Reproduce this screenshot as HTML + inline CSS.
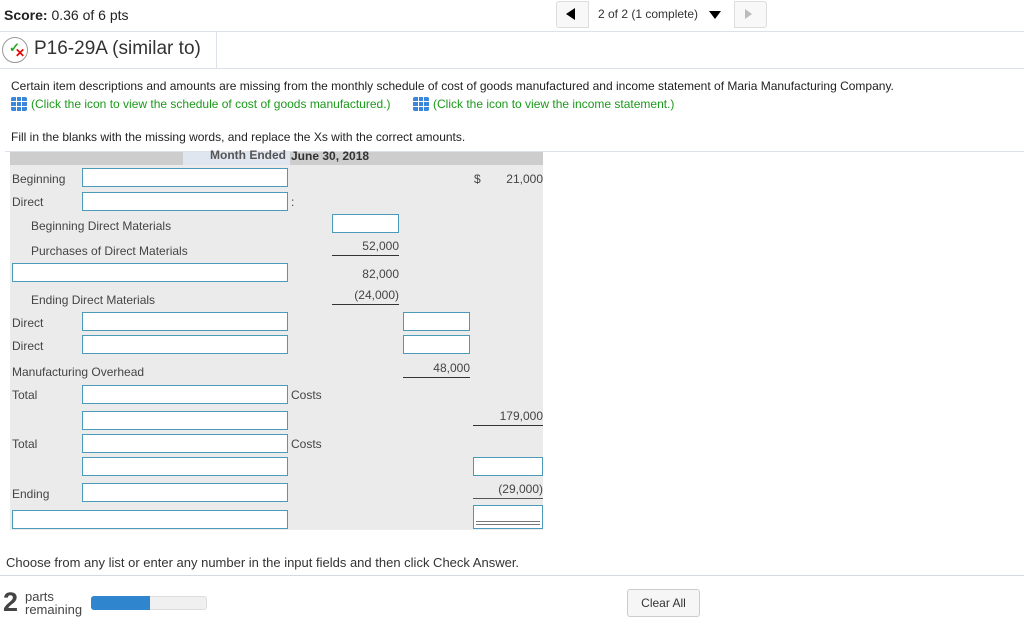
<!DOCTYPE html>
<html><head><meta charset="utf-8"><style>
*{box-sizing:border-box;margin:0;padding:0}
body{width:1024px;height:627px;background:#fff;font-family:"Liberation Sans",sans-serif;color:#333;position:relative;overflow:hidden}
.a{position:absolute;white-space:nowrap}
.t{font-size:12px;color:#444}
.in{position:absolute;background:#fff;border:1px solid #4a9ab8;height:19px}
.r{text-align:right}
.ul{position:absolute;height:1px;background:#333}
.ico{display:inline-block;width:16px;height:14px;background:#3b86d8;vertical-align:-3px;margin-right:4px;border-radius:2px;background-image:linear-gradient(90deg,transparent 5px,#fff 5px,#fff 6px,transparent 6px,transparent 10px,#fff 10px,#fff 11px,transparent 11px),linear-gradient(transparent 4px,#fff 4px,#fff 5px,transparent 5px,transparent 9px,#fff 9px,#fff 10px,transparent 10px)}
</style></head><body>
<div class="a" style="left:4px;top:7px;font-size:14px;color:#222"><b>Score:</b> 0.36 of 6 pts</div>
<div class="a" style="left:556px;top:1px;width:211px;height:27px;border:1px solid #ddd;border-radius:3px;background:#f8f8f8"></div>
<div class="a" style="left:588px;top:1px;width:147px;height:27px;border-left:1px solid #ddd;border-right:1px solid #ddd;background:#fff"></div>
<div class="a" style="left:566px;top:8px;width:0;height:0;border-top:6px solid transparent;border-bottom:6px solid transparent;border-right:9px solid #000"></div>
<div class="a" style="left:598px;top:7px;font-size:12px;color:#333">2 of 2 (1 complete)</div>
<div class="a" style="left:709px;top:11px;border-left:6px solid transparent;border-right:6px solid transparent;border-top:8px solid #000"></div>
<div class="a" style="left:745px;top:9px;border-top:5px solid transparent;border-bottom:5px solid transparent;border-left:7px solid #bbb"></div>
<div class="a" style="left:0;top:31px;width:1024px;height:1px;background:#dde2ea"></div>
<div class="a" style="left:216px;top:32px;width:1px;height:36px;background:#dde2ea"></div>
<div class="a" style="left:2px;top:37px;width:26px;height:26px;border:1px solid #999;border-radius:50%;background:#fff"></div>
<div class="a" style="left:9px;top:40px;font-size:13px;color:#2a2;font-weight:bold">✓</div>
<div class="a" style="left:15px;top:46px;font-size:12px;color:#e00;font-weight:bold">✕</div>
<div class="a" style="left:34px;top:38px;font-size:19px;color:#333">P16-29A (similar to)</div>
<div class="a" style="left:0;top:68px;width:1024px;height:1px;background:#dde2ea"></div>
<div class="a" style="left:11px;top:79px;font-size:12px;color:#222">Certain item descriptions and amounts are missing from the monthly schedule of cost of goods manufactured and income statement of Maria Manufacturing Company.</div>
<div class="a" style="left:11px;top:97px;font-size:12px;color:#1a9a1a"><span class="ico"></span>(Click the icon to view the schedule of cost of goods manufactured.)</div>
<div class="a" style="left:413px;top:97px;font-size:12px;color:#1a9a1a"><span class="ico"></span>(Click the icon to view the income statement.)</div>
<div class="a" style="left:11px;top:130px;font-size:12px;color:#222">Fill in the blanks with the missing words, and replace the Xs with the correct amounts.</div>
<div class="a" style="left:5px;top:151px;width:1019px;height:1px;background:#dde2ea"></div>

<div class="a" style="left:10px;top:152px;width:533px;height:378px;background:#ebebeb"></div>
<div class="a" style="left:10px;top:152px;width:533px;height:13px;background:#cdcdcd"></div>
<div class="a" style="left:183px;top:152px;width:107px;height:13px;background:#dfe6ef"></div>
<div class="a" style="left:210px;top:148px;font-size:12px;font-weight:bold;color:#555">Month Ended</div>
<div class="a" style="left:291px;top:149px;font-size:12px;font-weight:bold;color:#333">June 30, 2018</div>

<div class="a t" style="left:12px;top:172px">Beginning</div>
<div class="in" style="left:82px;top:168px;width:206px"></div>
<div class="a t" style="left:474px;top:172px">$</div>
<div class="a t r" style="left:480px;top:172px;width:63px">21,000</div>
<div class="a t" style="left:12px;top:195px">Direct</div>
<div class="in" style="left:82px;top:192px;width:206px"></div>
<div class="a t" style="left:291px;top:195px">:</div>
<div class="a t" style="left:31px;top:219px">Beginning Direct Materials</div>
<div class="in" style="left:332px;top:214px;width:67px"></div>
<div class="a t" style="left:31px;top:244px">Purchases of Direct Materials</div>
<div class="a t r" style="left:333px;top:239px;width:66px">52,000</div>
<div class="ul" style="left:332px;top:255px;width:67px"></div>
<div class="in" style="left:12px;top:263px;width:276px"></div>
<div class="a t r" style="left:333px;top:267px;width:66px">82,000</div>
<div class="a t" style="left:31px;top:293px">Ending Direct Materials</div>
<div class="a t r" style="left:333px;top:288px;width:66px">(24,000)</div>
<div class="ul" style="left:332px;top:304px;width:67px"></div>
<div class="a t" style="left:12px;top:316px">Direct</div>
<div class="in" style="left:82px;top:312px;width:206px"></div>
<div class="in" style="left:403px;top:312px;width:67px"></div>
<div class="a t" style="left:12px;top:339px">Direct</div>
<div class="in" style="left:82px;top:335px;width:206px"></div>
<div class="in" style="left:403px;top:335px;width:67px"></div>
<div class="a t" style="left:12px;top:365px">Manufacturing Overhead</div>
<div class="a t r" style="left:403px;top:361px;width:67px">48,000</div>
<div class="ul" style="left:403px;top:377px;width:67px"></div>
<div class="a t" style="left:12px;top:388px">Total</div>
<div class="in" style="left:82px;top:385px;width:206px"></div>
<div class="a t" style="left:291px;top:388px">Costs</div>
<div class="in" style="left:82px;top:411px;width:206px"></div>
<div class="a t r" style="left:473px;top:409px;width:70px">179,000</div>
<div class="ul" style="left:473px;top:425px;width:70px"></div>
<div class="a t" style="left:12px;top:437px">Total</div>
<div class="in" style="left:82px;top:434px;width:206px"></div>
<div class="a t" style="left:291px;top:437px">Costs</div>
<div class="in" style="left:82px;top:457px;width:206px"></div>
<div class="in" style="left:473px;top:457px;width:70px"></div>
<div class="a t" style="left:12px;top:487px">Ending</div>
<div class="in" style="left:82px;top:483px;width:206px"></div>
<div class="a t r" style="left:473px;top:482px;width:70px">(29,000)</div>
<div class="ul" style="left:473px;top:498px;width:70px;background:#555"></div>
<div class="in" style="left:12px;top:510px;width:276px"></div>
<div class="in" style="left:473px;top:505px;width:70px;height:24px"></div>
<div class="a" style="left:476px;top:521px;width:64px;height:4px;border-top:1px solid #777;border-bottom:1px solid #777"></div>

<div class="a" style="left:6px;top:555px;font-size:13px;color:#333">Choose from any list or enter any number in the input fields and then click Check Answer.</div>
<div class="a" style="left:0;top:575px;width:1024px;height:1px;background:#d5dae2"></div>
<div class="a" style="left:3px;top:587px;font-size:27px;font-weight:bold;color:#444">2</div>
<div class="a" style="left:25px;top:590px;font-size:13px;color:#444;line-height:13px">parts<br>remaining</div>
<div class="a" style="left:91px;top:596px;width:116px;height:14px;border:1px solid #ddd;border-radius:3px;background:#f0f0f0"></div>
<div class="a" style="left:91px;top:596px;width:59px;height:14px;border-radius:3px 0 0 3px;background:#2f86cf"></div>
<div class="a" style="left:627px;top:589px;width:73px;height:28px;border:1px solid #ccc;border-radius:3px;background:#f6f6f6;font-size:12px;color:#333;text-align:center;line-height:26px">Clear All</div>
</body></html>
